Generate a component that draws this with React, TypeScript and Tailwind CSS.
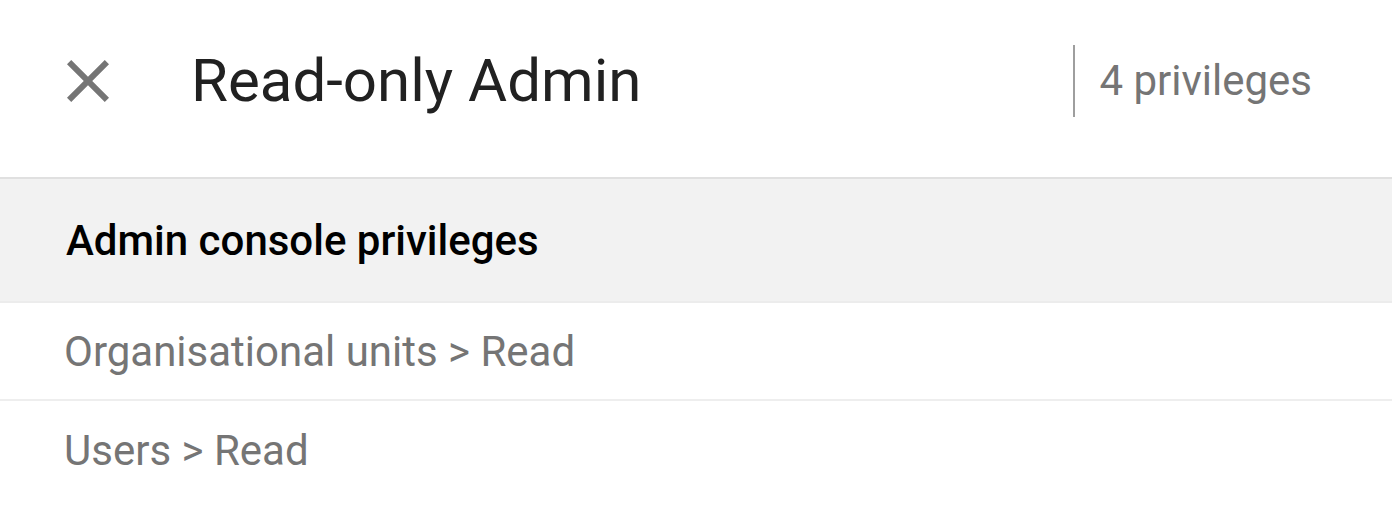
const rows = ["Organisational units > Read", "Users > Read"];

export default function App() {
  return (
    <div className="w-[1392px] h-[516px] bg-white overflow-hidden font-['Roboto',sans-serif]">
      <header className="flex items-start h-[179px] pt-[45px] border-b-2 border-[#e0e0e0]">
        <button className="ml-[52px] w-[72px] h-[72px] flex items-center justify-center text-[#757575]">
          <svg viewBox="0 0 24 24" width="72" height="72" fill="currentColor">
            <path d="M19 6.41L17.59 5 12 10.59 6.41 5 5 6.41 10.59 12 5 17.59 6.41 19 12 13.41 17.59 19 19 17.59 13.41 12z" />
          </svg>
        </button>
        <h1 className="ml-[67px] text-[60px] leading-[72px] text-[#212121] font-normal">Read-only Admin</h1>
        <div className="ml-auto flex items-center h-[72px]">
          <div className="w-[2px] h-[72px] bg-[#9e9e9e]" />
          <span className="ml-[24px] mr-[80px] text-[42px] leading-[72px] text-[#757575]">4 privileges</span>
        </div>
      </header>
      <div className="h-[124px] flex items-center pl-[66px] bg-[#f2f2f2] border-b-2 border-[#ececec]">
        <span className="text-[42px] font-medium text-black">Admin console privileges</span>
      </div>
      {rows.map((r) => (
        <div key={r} className="h-[98px] flex items-center pl-[64px] border-b-2 border-[#eeeeee] last:border-b-0">
          <span className="text-[42px] text-[#757575]">{r}</span>
        </div>
      ))}
    </div>
  );
}
